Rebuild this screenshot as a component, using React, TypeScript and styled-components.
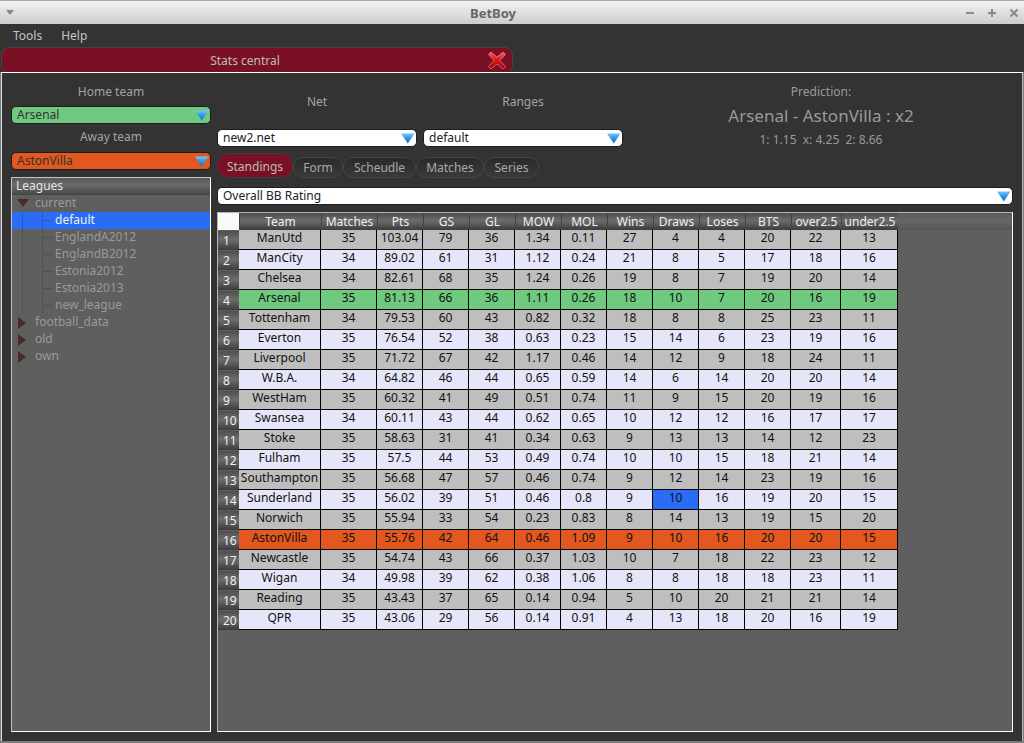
import React from "react";
import styled, { createGlobalStyle } from "styled-components";

const GlobalStyle = createGlobalStyle`
  html, body { margin: 0; padding: 0; background: #878787; }
  body { font-family: "Noto Sans", "Open Sans", sans-serif; font-size: 12px; }
  * { box-sizing: border-box; }
`;

const COLUMNS = [
  ["Team", 82], ["Matches", 56], ["Pts", 46], ["GS", 46], ["GL", 46], ["MOW", 46], ["MOL", 46],
  ["Wins", 46], ["Draws", 46], ["Loses", 46], ["BTS", 46], ["over2.5", 50], ["under2.5", 57],
] as const;

const STANDINGS = [
  "ManUtd 35 103.04 79 36 1.34 0.11 27 4 4 20 22 13",
  "ManCity 34 89.02 61 31 1.12 0.24 21 8 5 17 18 16",
  "Chelsea 34 82.61 68 35 1.24 0.26 19 8 7 19 20 14",
  "Arsenal 35 81.13 66 36 1.11 0.26 18 10 7 20 16 19",
  "Tottenham 34 79.53 60 43 0.82 0.32 18 8 8 25 23 11",
  "Everton 35 76.54 52 38 0.63 0.23 15 14 6 23 19 16",
  "Liverpool 35 71.72 67 42 1.17 0.46 14 12 9 18 24 11",
  "W.B.A. 34 64.82 46 44 0.65 0.59 14 6 14 20 20 14",
  "WestHam 35 60.32 41 49 0.51 0.74 11 9 15 20 19 16",
  "Swansea 34 60.11 43 44 0.62 0.65 10 12 12 16 17 17",
  "Stoke 35 58.63 31 41 0.34 0.63 9 13 13 14 12 23",
  "Fulham 35 57.5 44 53 0.49 0.74 10 10 15 18 21 14",
  "Southampton 35 56.68 47 57 0.46 0.74 9 12 14 23 19 16",
  "Sunderland 35 56.02 39 51 0.46 0.8 9 10 16 19 20 15",
  "Norwich 35 55.94 33 54 0.23 0.83 8 14 13 19 15 20",
  "AstonVilla 35 55.76 42 64 0.46 1.09 9 10 16 20 20 15",
  "Newcastle 35 54.74 43 66 0.37 1.03 10 7 18 22 23 12",
  "Wigan 34 49.98 39 62 0.38 1.06 8 8 18 18 23 11",
  "Reading 35 43.43 37 65 0.14 0.94 5 10 20 21 21 14",
  "QPR 35 43.06 29 56 0.14 0.91 4 13 18 20 16 19",
].map((line) => line.split(" "));

const LEAGUES = ["EnglandA2012", "EnglandB2012", "Estonia2012", "Estonia2013", "new_league"];
const TABS = ["Form", "Scheudle", "Matches", "Series"];

const Win = styled.div`
  width: 1024px;
  height: 743px;
  background: #7c7c7c;
  overflow: hidden;
  display: flex;
  flex-direction: column;
  position: relative;
`;

const TitleBar = styled.div`
  height: 24px;
  flex: none;
  display: grid;
  grid-template-columns: 1fr auto 1fr;
  align-items: center;
  padding: 1px 5px 0;
  border-top: 1px solid #aaa;
  background: linear-gradient(#f2f2f2, #cdcdcd);
`;

const TitleText = styled.div`
  font-weight: 700;
  font-size: 13px;
  margin-right: 38px;
  color: #666;
`;

const WinButtons = styled.div`
  display: flex;
  justify-content: flex-end;
  gap: 12px;
  svg { display: block; }
`;

const MenuBar = styled.div`
  height: 23px;
  flex: none;
  display: flex;
  gap: 19px;
  padding-left: 13px;
  align-items: center;
  background: #333;
  color: #c4c4c4;
`;

const TabRow = styled.div`
  height: 25px;
  flex: none;
  display: flex;
  background: #333;
`;

const StatsTab = styled.div`
  width: 512px;
  height: 26px;
  margin-left: 1px;
  background: #7a1023;
  border: 1px solid #444;
  border-bottom: none;
  border-radius: 8px;
  color: #bdbdbd;
  display: flex;
  align-items: center;
  padding: 0 6px 0 0;
  position: relative;
`;

const StatsLabel = styled.span`
  flex: 1;
  text-align: center;
  padding-right: 18px;
`;

const Panel = styled.div`
  flex: none;
  height: 669px;
  margin-left: 1px;
  width: 1022px;
  border-top: 1px solid #fff;
  border-left: 1px solid #ddd;
  border-right: 1px solid #bbb;
  padding: 0 8px 0 9px;
  background: #333;
  display: grid;
  grid-template-columns: 200px 796px;
  column-gap: 6px;
  position: relative;
  z-index: 1;
`;

const Side = styled.div`
  display: flex;
  flex-direction: column;
`;

const FieldLabel = styled.div<{ $h: number; $top?: number; $bottom?: number }>`
  height: ${(p) => p.$h}px;
  padding-top: ${(p) => p.$top ?? 0}px;
  padding-bottom: ${(p) => p.$bottom ?? 0}px;
  display: flex;
  align-items: center;
  justify-content: center;
  color: #a3a3a3;
`;

const Combo = styled.div<{ $bg?: string }>`
  height: 18px;
  flex: none;
  border-radius: 5px;
  border: 1px solid #1c1c1c;
  background: ${(p) => p.$bg ?? "#ffffff"};
  color: ${(p) => (p.$bg ? "#333" : "#222")};
  display: flex;
  align-items: center;
  justify-content: space-between;
  padding: 0 0 0 5px;
  line-height: 16px;
  svg { display: block; margin-right: 0; }
`;

const Tree = styled.div`
  height: 555px;
  margin-top: 7px;
  background: #5f5f5f;
  border: 1px solid #c4c4c4;
  border-bottom-color: #fff;
  border-right-color: #fff;
`;

const TreeHead = styled.div`
  height: 17px;
  padding-left: 4px;
  color: #e6e6e6;
  line-height: 15px;
  background: linear-gradient(#5a5a5a, #6a6a6a 45%, #4a4a4a);
  border-bottom: 1px solid #444;
`;

const TreeRow = styled.div<{ $depth: number; $selected?: boolean }>`
  height: 17px;
  line-height: 16px;
  position: relative;
  padding-left: ${(p) => (p.$depth ? 43 : 23)}px;
  color: ${(p) => (p.$selected ? "#f0f0f0" : "#9a9a9a")};
  background: ${(p) => (p.$selected ? "#2a6cf5" : "transparent")};
`;

const Branch = styled.span`
  position: absolute;
  left: 30px;
  top: 0;
  bottom: 0;
  width: 11px;
  border-left: 1px solid rgba(70, 40, 40, 0.3);
  &::before {
    content: "";
    position: absolute;
    left: -21px;
    top: 0;
    bottom: 0;
    border-left: 1px solid rgba(70, 40, 40, 0.3);
  }
  &::after {
    content: "";
    position: absolute;
    left: 0;
    right: 0;
    top: 8px;
    border-top: 1px solid rgba(70, 40, 40, 0.3);
  }
`;

const Arrow = styled.svg`
  position: absolute;
  left: 5px;
  top: 3px;
`;

const Main = styled.div`
  display: flex;
  flex-direction: column;
`;

const TopBlock = styled.div`
  height: 74px;
  display: grid;
  grid-template-columns: 200px 200px 1fr;
  grid-template-rows: 74px;
  column-gap: 6px;
`;

const TopColumn = styled.div`
  display: flex;
  flex-direction: column;
  justify-content: flex-end;
`;

const Prediction = styled.div`
  display: flex;
  flex-direction: column;
  align-items: center;
  margin-top: 9px;
  color: #9a9a9a;
`;

const PredLine = styled.div<{ $big?: boolean; $h: number }>`
  height: ${(p) => p.$h}px;
  line-height: ${(p) => p.$h}px;
  font-size: ${(p) => (p.$big ? 17 : 12)}px;
`;

const Tabs = styled.div`
  height: 27px;
  margin-top: 6px;
  display: flex;
  align-items: flex-start;
`;

const ActiveTab = styled.div`
  width: 76px;
  height: 25px;
  padding-top: 1px;
  background: #7a1023;
  border: 1px solid #3e3e3e;
  border-radius: 11px;
  color: #bdbdbd;
  display: flex;
  align-items: center;
  justify-content: center;
`;

const TabBtn = styled.div<{ $w: number }>`
  width: ${(p) => p.$w}px;
  height: 21px;
  margin-top: 4px;
  background: linear-gradient(#2a2a2a, #3a3a3a);
  border: 1px solid #444;
  border-radius: 10px;
  color: #a8a8a8;
  display: flex;
  align-items: center;
  justify-content: center;
`;

const RatingRow = styled.div`
  margin-top: 7px;
  margin-bottom: 7px;
`;

const TableFrame = styled.div`
  height: 520px;
  background: linear-gradient(#5a5a5a, #666 8px, #555 17px, #5f5f5f 17px);
  border: 1px solid #b5b5b5;
  border-bottom-color: #fff;
  border-right-color: #fff;
`;

const Table = styled.table`
  border-collapse: separate;
  border-spacing: 0;
  table-layout: fixed;
  width: 678px;
`;

const Corner = styled.th`
  width: 21px;
  height: 17px;
  padding: 0;
  background: #fafafa;
`;

const ColHead = styled.th`
  height: 17px;
  padding: 0;
  font-weight: 400;
  color: #f0f0f0;
  text-align: center;
  border-left: 1px solid #444;
  background: linear-gradient(#4e4e4e, #6c6c6c 45%, #3c3c3c);
  overflow: hidden;
  white-space: nowrap;
`;

const RowHead = styled.th`
  height: 20px;
  padding: 0 0 0 5px;
  font-weight: 400;
  text-align: left;
  color: #f0f0f0;
  border-top: 1px solid #5f5f5f;
  background: linear-gradient(#4e4e4e, #6c6c6c 45%, #3c3c3c);
`;

const Cell = styled.td<{ $bg: string }>`
  height: 20px;
  padding: 0 0 3px;
  text-align: center;
  color: #111;
  line-height: 16px;
  background: ${(p) => p.$bg};
  border-right: 1px solid #000;
  border-bottom: 1px solid #000;
  white-space: nowrap;
  overflow: hidden;
`;

const ComboArrow = () => (
  <svg width="16" height="12" viewBox="0 0 16 12">
    <defs>
      <linearGradient id="comboBlue" x1="0" y1="0" x2="0" y2="1">
        <stop offset="0" stopColor="#7cc4f5" />
        <stop offset="0.5" stopColor="#2a95e8" />
        <stop offset="1" stopColor="#1a6fc4" />
      </linearGradient>
    </defs>
    <path d="M1 1.5 H14.5 L7.8 11.5 Z" fill="url(#comboBlue)" />
  </svg>
);

const CloseCross = () => (
  <svg width="18" height="19" viewBox="0 0 18 19" style={{ position: "absolute", right: 6, top: 3 }}>
    <defs>
      <linearGradient id="crossRed" x1="0" y1="0" x2="0" y2="1">
        <stop offset="0" stopColor="#ff5a5a" />
        <stop offset="0.5" stopColor="#e01010" />
        <stop offset="1" stopColor="#9c0808" />
      </linearGradient>
    </defs>
    <path
      d="M3 1 L9 6 L15 1 L17.5 3.5 L12 9.5 L17.5 15.5 L15 18 L9 13 L3 18 L.5 15.5 L6 9.5 L.5 3.5 Z"
      fill="url(#crossRed)"
      stroke="#c9c9c9"
      strokeWidth=".5"
    />
  </svg>
);

const rowColor = (i: number, team: string) => {
  if (team === "Arsenal") return "#6fc97f";
  if (team === "AstonVilla") return "#e2581f";
  return i % 2 === 0 ? "#bebebe" : "#e6e6fa";
};

const DownArrow = () => (
  <Arrow width="12" height="10" viewBox="0 0 12 10">
    <path d="M0 1 H12 L6 9 Z" fill="#4c2a26" />
  </Arrow>
);

const RightArrow = () => (
  <Arrow width="9" height="12" viewBox="0 0 9 12">
    <path d="M1 0 L9 6 L1 12 Z" fill="#4c2a26" />
  </Arrow>
);

export default function App() {
  return (
    <Win>
      <GlobalStyle />
      <TitleBar>
        <svg width="10" height="6" viewBox="0 0 10 6">
          <path d="M1 0 H9 L5 5 Z" fill="#888" />
        </svg>
        <TitleText>BetBoy</TitleText>
        <WinButtons>
          <svg width="10" height="10" viewBox="0 0 10 10">
            <path d="M1 5 H9" stroke="#8a8a8a" strokeWidth="2" />
          </svg>
          <svg width="10" height="10" viewBox="0 0 10 10">
            <path d="M1 5 H9 M5 1 V9" stroke="#8a8a8a" strokeWidth="2" />
          </svg>
          <svg width="10" height="10" viewBox="0 0 10 10">
            <path d="M1.5 1.5 L8.5 8.5 M8.5 1.5 L1.5 8.5" stroke="#8a8a8a" strokeWidth="2" />
          </svg>
        </WinButtons>
      </TitleBar>
      <MenuBar>
        <span>Tools</span>
        <span>Help</span>
      </MenuBar>
      <TabRow>
        <StatsTab>
          <StatsLabel>Stats central</StatsLabel>
          <CloseCross />
        </StatsTab>
      </TabRow>
      <Panel>
        <Side>
          <FieldLabel $h={33} $top={4}>Home team</FieldLabel>
          <Combo $bg="#6fc97f">
            Arsenal
            <ComboArrow />
          </Combo>
          <FieldLabel $h={28} $bottom={3}>Away team</FieldLabel>
          <Combo $bg="#e2581f">
            AstonVilla
            <ComboArrow />
          </Combo>
          <Tree>
            <TreeHead>Leagues</TreeHead>
            <TreeRow $depth={0}>
              <DownArrow />
              current
            </TreeRow>
            <TreeRow $depth={1} $selected>
              <Branch />
              default
            </TreeRow>
            {LEAGUES.map((name) => (
              <TreeRow $depth={1} key={name}>
                <Branch />
                {name}
              </TreeRow>
            ))}
            {["football_data", "old", "own"].map((name) => (
              <TreeRow $depth={0} key={name}>
                <RightArrow />
                {name}
              </TreeRow>
            ))}
          </Tree>
        </Side>
        <Main>
          <TopBlock>
            <TopColumn>
              <FieldLabel $h={53} $bottom={2}>Net</FieldLabel>
              <Combo>
                new2.net
                <ComboArrow />
              </Combo>
            </TopColumn>
            <TopColumn>
              <FieldLabel $h={53} $bottom={2}>Ranges</FieldLabel>
              <Combo>
                default
                <ComboArrow />
              </Combo>
            </TopColumn>
            <Prediction>
              <PredLine $h={19}>Prediction:</PredLine>
              <PredLine $h={30} $big>
                Arsenal - AstonVilla : x2
              </PredLine>
              <PredLine $h={18}>1: 1.15&nbsp; x: 4.25&nbsp; 2: 8.66</PredLine>
            </Prediction>
          </TopBlock>
          <Tabs>
            <ActiveTab>Standings</ActiveTab>
            {TABS.map((t, i) => (
              <TabBtn key={t} $w={[50, 73, 68, 55][i]}>
                {t}
              </TabBtn>
            ))}
          </Tabs>
          <RatingRow>
            <Combo>
              Overall BB Rating
              <ComboArrow />
            </Combo>
          </RatingRow>
          <TableFrame>
            <Table>
              <colgroup>
                <col style={{ width: 21 }} />
                {COLUMNS.map(([name, w]) => (
                  <col key={name} style={{ width: w }} />
                ))}
              </colgroup>
              <thead>
                <tr>
                  <Corner />
                  {COLUMNS.map(([name]) => (
                    <ColHead key={name}>{name}</ColHead>
                  ))}
                </tr>
              </thead>
              <tbody>
                {STANDINGS.map((row, i) => (
                  <tr key={row[0]}>
                    <RowHead>{i + 1}</RowHead>
                    {row.map((value, c) => (
                      <Cell
                        key={c}
                        $bg={row[0] === "Sunderland" && c === 8 ? "#2a6cf5" : rowColor(i, row[0])}
                      >
                        {value}
                      </Cell>
                    ))}
                  </tr>
                ))}
              </tbody>
            </Table>
          </TableFrame>
        </Main>
      </Panel>
    </Win>
  );
}
